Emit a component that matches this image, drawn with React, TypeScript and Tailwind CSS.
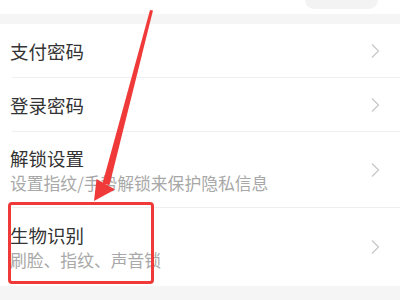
import React from "react";

const font = { fontFamily: '"Noto Sans CJK SC", "Noto Sans", sans-serif' };

function Chevron() {
  return (
    <svg width="10" height="16" viewBox="0 0 10 16" className="shrink-0">
      <path d="M2 1.5 L8.5 8 L2 14.5" fill="none" stroke="#c8c8c8" strokeWidth="1.3" />
    </svg>
  );
}

function Row({ title, sub, h }: { title: string; sub?: string; h: string }) {
  return (
    <div className={`flex items-center justify-between pl-[10px] pr-[20px] ${h}`}>
      <div className="flex flex-col">
        <div className="text-[18.5px] leading-[26px] text-[#333333]">{title}</div>
        {sub && <div className="text-[16.8px] leading-[24px] text-[#a8a8a8]">{sub}</div>}
      </div>
      <Chevron />
    </div>
  );
}

export default function App() {
  return (
    <div className="relative w-[400px] h-[300px] overflow-hidden bg-white" style={font}>
      <div className="h-[14px] bg-white flex justify-end pr-[22px]">
        <div className="w-[73px] h-[9px] rounded-b-full bg-[#f3f3f3]" />
      </div>
      <div className="h-[10px] bg-[#f5f5f5]" />
      <Row title="支付密码" h="h-[53px]" />
      <div className="ml-[12px] h-px bg-[#efefef]" />
      <Row title="登录密码" h="h-[53px]" />
      <div className="ml-[12px] h-px bg-[#efefef]" />
      <Row title="解锁设置" sub="设置指纹/手势解锁来保护隐私信息" h="h-[75px]" />
      <div className="ml-[12px] h-px bg-[#efefef]" />
      <Row title="生物识别" sub="刷脸、指纹、声音锁" h="h-[78px]" />
      <div className="h-[20px] bg-[#f5f5f5]" />

      {/* annotation overlay */}
      <div className="absolute left-[8px] top-[202px] w-[146px] h-[82px] border-[3px] border-[#f03a3a] rounded-[4px]" />
      <svg className="absolute left-0 top-0" width="400" height="300" viewBox="0 0 400 300">
        <polygon points="150,10 153,10.5 109.5,185 102.5,183.5" fill="#f03a3a" />
        <polygon points="94,201 96.5,179 115,189.5" fill="#f03a3a" />
      </svg>
    </div>
  );
}
